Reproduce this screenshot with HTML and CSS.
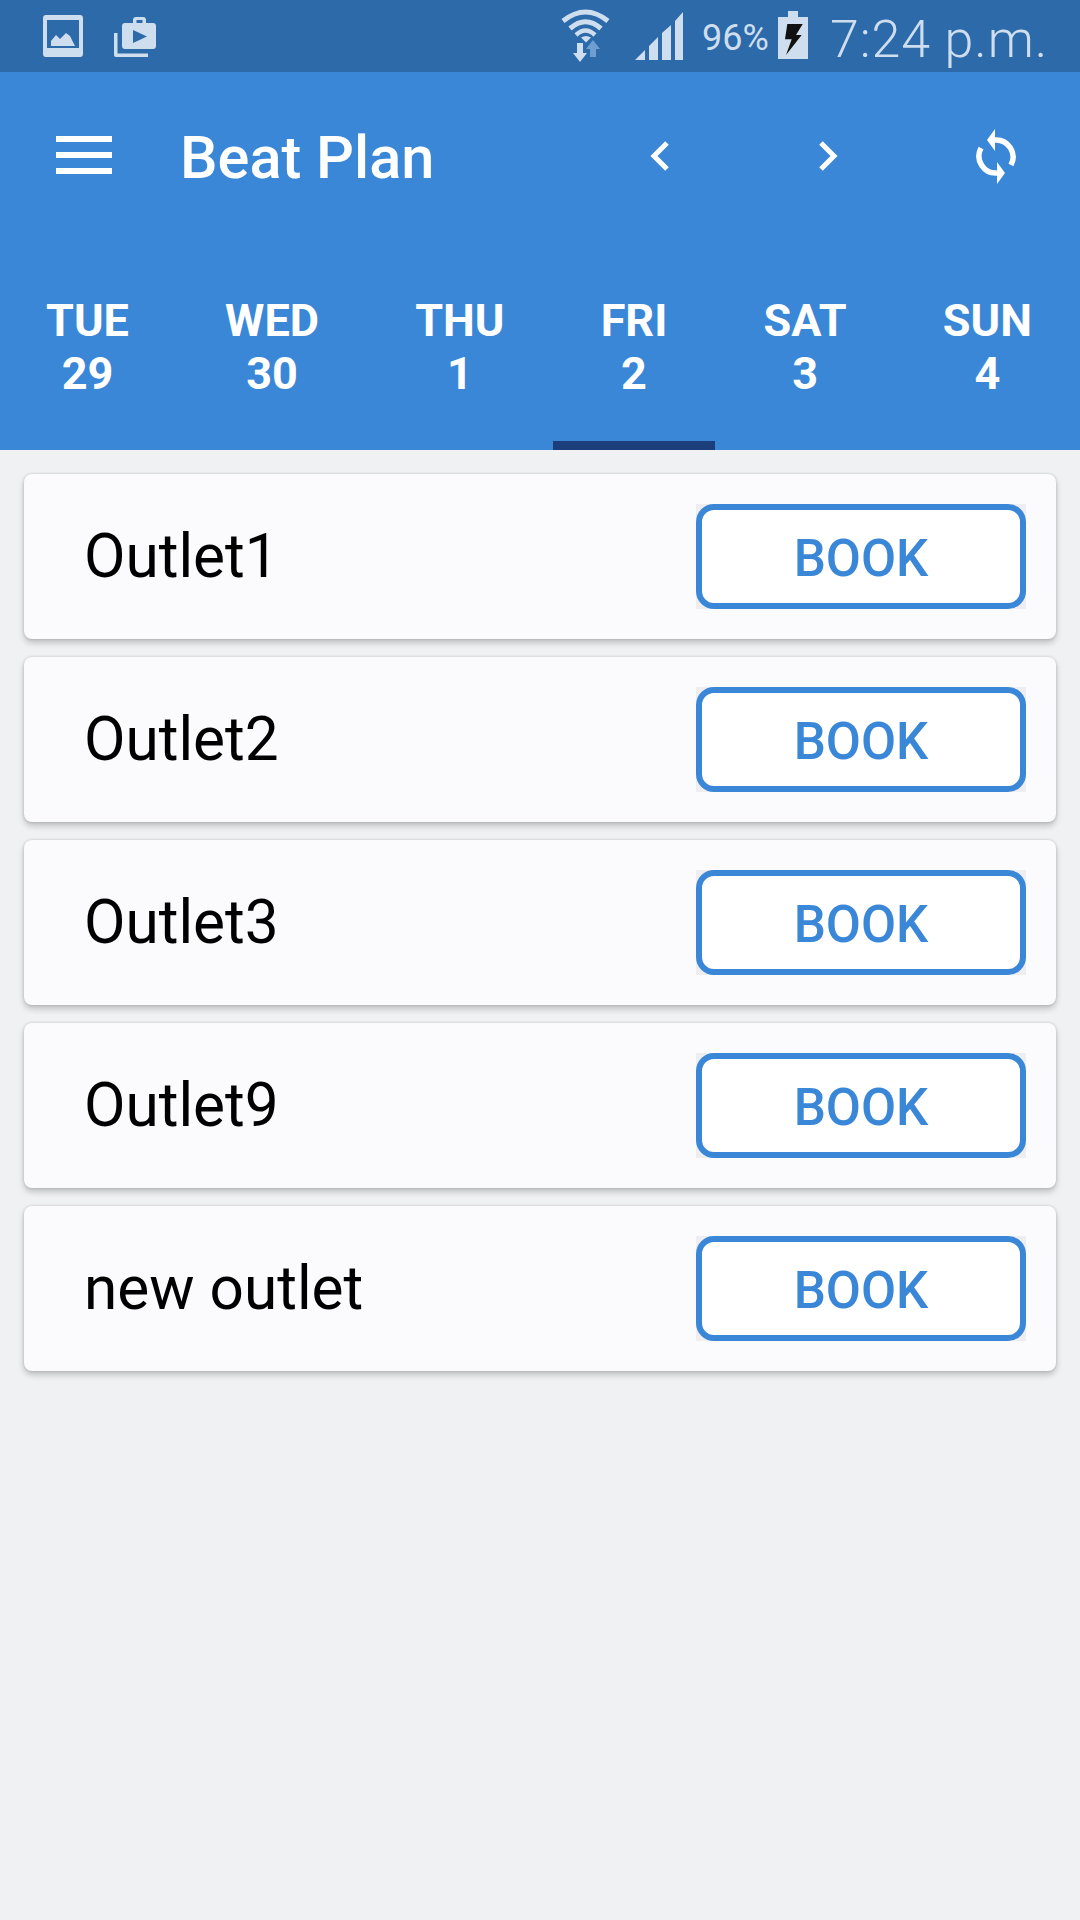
FILE: index.html
```html
<!DOCTYPE html>
<html lang="en">
<head>
<meta charset="utf-8">
<title>Beat Plan</title>
<link rel="stylesheet" href="styles.css">
</head>
<body>
<div class="status">
  <svg class="ic-gallery" viewBox="0 0 40 42"><path class="sb" fill-rule="evenodd" d="M3 0h34a3 3 0 0 1 3 3v36a3 3 0 0 1-3 3H3a3 3 0 0 1-3-3V3a3 3 0 0 1 3-3zM4 5v28h32V5z"/><path class="sb" d="M8 31v-5l5-6 4 4 6-6 4 3 5 10z"/></svg>
  <svg class="ic-case" viewBox="0 0 42 40"><path class="sb" d="M0 16h3.5v20.500H34V40H2a2 2 0 0 1-2-2z"/><path class="sb" fill-rule="evenodd" d="M11 6h8V3a3 3 0 0 1 3-3h7a3 3 0 0 1 3 3v3h7a3 3 0 0 1 3 3v20a3 3 0 0 1-3 3H11a3 3 0 0 1-3-3V9a3 3 0 0 1 3-3zM22.500 3v3h6V3zM19 13v13l14-6.500z"/></svg>
  <span class="spacer"></span>
  <svg class="ic-wifi" viewBox="0 0 49 53">
    <path class="sl" d="M2 12Q24.500-6 47 12" stroke-width="5"/>
    <path class="sl" d="M9 19.500Q24.500 6 40 19.500" stroke-width="5"/>
    <path class="sl" d="M15 26Q24.500 17 34 26" stroke-width="4.500"/>
    <path class="sb" d="M20 28.500q5-3 10 0l-5 5z"/>
    <path class="dim" d="M32 31l7 9h-4v8h-6v-8h-4z"/>
    <path class="sb" d="M16 34h6v10h4l-7 9-7-9h4z"/>
  </svg>
  <svg class="ic-signal" viewBox="0 0 48 48"><path class="sb" d="M0 48l10-10v10zM14 48V34l9-9v23zM27 48V21l9-8v35zM40 48V9l8-9v48z"/></svg>
  <span class="pct">96%</span>
  <svg class="ic-batt" viewBox="0 0 30 48"><path class="sb" d="M10 0h10v6h10v42H0V6h10z"/><path fill="#111" d="M9.300 13H24.700L18 24H23.700L8 44l5.700-15.700H7z"/></svg>
  <span class="clock">7:24 p.m.</span>
</div>
<header class="appbar">
  <div class="toolbar">
    <div class="burger"><i></i><i></i><i></i></div>
    <h1 class="title">Beat Plan</h1>
    <svg class="ic-chev ic-prev" viewBox="0 0 21 32"><path class="wl" d="M18 3L5 16l13 13"/></svg>
    <svg class="ic-chev ic-next" viewBox="0 0 21 32"><path class="wl" d="M3 3l13 13L3 29"/></svg>
    <svg class="ic-sync" viewBox="0 0 40 55">
      <path class="wa" d="M19 11A17 17 0 0 1 35 36"/>
      <path class="wa" d="M21 44A17 17 0 0 1 5 19"/>
      <path class="wf" d="M11 11l8-11v22z"/>
      <path class="wf" d="M29 44l-8-11v22z"/>
    </svg>
  </div>
  <nav class="tabs">
    <div class="tab"><span>TUE</span><span>29</span></div>
    <div class="tab"><span>WED</span><span>30</span></div>
    <div class="tab"><span>THU</span><span>1</span></div>
    <div class="tab active"><span>FRI</span><span>2</span></div>
    <div class="tab"><span>SAT</span><span>3</span></div>
    <div class="tab"><span>SUN</span><span>4</span></div>
  </nav>
</header>
<main class="list">
  <section class="card"><span class="name">Outlet1</span><div class="book-wrap"><button class="book">BOOK</button></div></section>
  <section class="card"><span class="name">Outlet2</span><div class="book-wrap"><button class="book">BOOK</button></div></section>
  <section class="card"><span class="name">Outlet3</span><div class="book-wrap"><button class="book">BOOK</button></div></section>
  <section class="card"><span class="name">Outlet9</span><div class="book-wrap"><button class="book">BOOK</button></div></section>
  <section class="card"><span class="name">new outlet</span><div class="book-wrap"><button class="book">BOOK</button></div></section>
</main>
</body>
</html>
```
FILE: styles.css
```css
* { box-sizing: border-box; }
html, body { margin: 0; padding: 0; }
body {
  width: 1080px;
  height: 1920px;
  overflow: hidden;
  background: #f0f1f3;
  font-family: Roboto, "Liberation Sans", sans-serif;
}
svg { display: block; flex: none; }
.sb { fill: #cfdeee; }
.sl { fill: none; stroke: #cfdeee; }
.dim { fill: #6f9fd0; }
.wl { fill: none; stroke: #fff; stroke-width: 5; }
.wa { fill: none; stroke: #fff; stroke-width: 5.5; }
.wf { fill: #fff; }

.status {
  height: 72px;
  background: #2c6aa9;
  display: flex;
  align-items: flex-start;
  color: #cfdeee;
  padding-left: 43px;
}
.ic-gallery { width: 40px; height: 42px; margin-top: 15px; }
.ic-case { width: 42px; height: 40px; margin: 17px 0 0 31px; }
.spacer { flex: 1; }
.ic-wifi { width: 49px; height: 53px; margin-top: 9px; }
.ic-signal { width: 48px; height: 48px; margin: 12px 0 0 25px; }
.pct { font-size: 36px; line-height: 40px; margin: 18px 0 0 19px; width: 76px; white-space: nowrap; }
.ic-batt { width: 30px; height: 48px; margin: 11px 0 0 0; }
.clock { font-size: 52px; font-weight: 300; line-height: 60px; margin: 10px 32px 0 22px; letter-spacing: .9px; white-space: nowrap; }

.appbar { background: #3a87d8; height: 378px; display: flex; flex-direction: column; }
.toolbar { height: 168px; display: flex; align-items: center; color: #fff; padding-left: 56px; }
.burger { width: 56px; height: 38px; display: flex; flex-direction: column; justify-content: space-between; margin-top: -2px; }
.burger i { display: block; height: 6px; background: #fff; }
.title { margin: 4px 0 0 68px; width: 469px; font-size: 59.5px; font-weight: 500; line-height: 66px; white-space: nowrap; }
.ic-chev { width: 21px; height: 32px; }
.ic-next { margin-left: 148px; }
.ic-sync { width: 40px; height: 55px; margin-left: 137px; }

.tabs { flex: 1; display: flex; margin-left: -2px; }
.tab {
  flex: auto;
  display: flex;
  flex-direction: column;
  align-items: center;
  padding-top: 54px;
  color: #fff;
  font-size: 45px;
  font-weight: 700;
  line-height: 53px;
  border-bottom: 9px solid transparent;
}
.tab.active { border-bottom-color: #1c3f7c; }

.list { display: flex; flex-direction: column; gap: 18px; padding: 24px 24px 0; }
.card {
  height: 165px;
  background: #fbfbfd;
  border-radius: 8px;
  box-shadow: 0 0 3px rgba(0,0,0,.18), 0 4px 6px rgba(0,0,0,.2);
  display: flex;
  align-items: center;
  justify-content: space-between;
  padding: 0 30px 0 60px;
}
.name { font-size: 60.3px; color: #000; line-height: 70px; }
.book-wrap { background: #eeeef1; }
.book {
  display: block;
  width: 330px;
  height: 105px;
  background: #fff;
  border: 6px solid #3a87d8;
  border-radius: 18px;
  color: #3a87d8;
  font-family: inherit;
  font-size: 51px;
  font-weight: 500;
  line-height: 1;
  padding: 3px 0 0;
}
```
